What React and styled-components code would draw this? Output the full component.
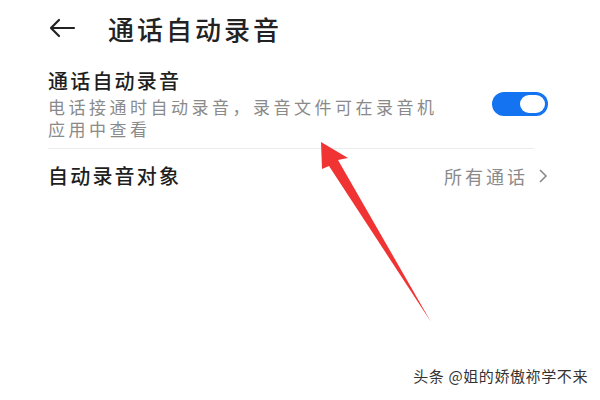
import React from "react";
import styled, { createGlobalStyle } from "styled-components";

const GlobalStyle = createGlobalStyle`
  html, body {
    margin: 0;
    padding: 0;
    background: #fff;
    font-family: "Noto Sans CJK SC", "Noto Sans", sans-serif;
  }
`;

const Page = styled.div`
  position: relative;
  width: 600px;
  height: 400px;
  overflow: hidden;
  background: #fff;
`;

const Header = styled.div`
  display: flex;
  align-items: center;
  height: 56px;
  padding-left: 48px;
`;

const BackBtn = styled.div`
  display: flex;
  align-items: center;
  width: 60px;
  color: #222;
`;

const Title = styled.div`
  font-size: 26px;
  letter-spacing: 3px;
  color: #222;
  font-weight: 500;
`;

const List = styled.div`
  padding: 0 66px 0 48px;
`;

const Row = styled.div`
  display: flex;
  align-items: center;
  justify-content: space-between;
  padding: ${(p) => p.pad || "10px 0"};
  border-bottom: ${(p) => (p.divider ? "1px solid #ececec" : "none")};
`;

const TextCol = styled.div`
  display: flex;
  flex-direction: column;
`;

const RowTitle = styled.div`
  font-size: 20px;
  letter-spacing: 2.2px;
  color: #1e1e1e;
  font-weight: 500;
  line-height: 26px;
`;

const RowSub = styled.div`
  font-size: 17px;
  letter-spacing: 3.5px;
  color: #8a8a8a;
  line-height: 22px;
  width: 400px;
  margin-top: 2px;
`;

const Toggle = styled.div`
  width: 56px;
  height: 24px;
  border-radius: 12px;
  background: #1473f0;
  display: flex;
  align-items: center;
  justify-content: flex-end;
  padding: 0 3px;
  box-sizing: border-box;
  margin-right: -14px;
`;

const Thumb = styled.div`
  width: 25px;
  height: 18px;
  border-radius: 10px;
  background: #fff;
`;

const Value = styled.div`
  display: flex;
  align-items: center;
  gap: 10px;
  font-size: 18px;
  letter-spacing: 3px;
  color: #8a8a8a;
  margin-right: -14px;
`;

const ArrowOverlay = styled.svg`
  position: absolute;
  left: 0;
  top: 0;
  pointer-events: none;
`;

const Watermark = styled.div`
  position: absolute;
  right: 12px;
  bottom: 14px;
  font-family: "Noto Sans CJK SC", sans-serif;
  font-size: 15px;
  letter-spacing: 0.6px;
  color: #333;
  text-shadow: 0 0 2px #fff, 0 0 2px #fff;
`;

export default function App() {
  return (
    <Page>
      <GlobalStyle />
      <Header>
        <BackBtn>
          <svg width="28" height="22" viewBox="0 0 28 22" fill="none" stroke="#222" strokeWidth="2.2" strokeLinecap="round" strokeLinejoin="round">
            <path d="M26 11H3M11 3L3 11L11 19" />
          </svg>
        </BackBtn>
        <Title>通话自动录音</Title>
      </Header>
      <List>
        <Row divider pad="12px 0 8px">
          <TextCol>
            <RowTitle>通话自动录音</RowTitle>
            <RowSub>电话接通时自动录音，录音文件可在录音机应用中查看</RowSub>
          </TextCol>
          <Toggle>
            <Thumb />
          </Toggle>
        </Row>
        <Row pad="14px 0">
          <RowTitle>自动录音对象</RowTitle>
          <Value>
            所有通话
            <svg width="10" height="16" viewBox="0 0 10 16" fill="none" stroke="#8a8a8a" strokeWidth="1.6">
              <path d="M2 2L8 8L2 14" />
            </svg>
          </Value>
        </Row>
      </List>
      <ArrowOverlay width="600" height="400" viewBox="0 0 600 400">
        <path d="M321 142 L348 158 L338 160 L431 322 L329 166 L322 169 Z" fill="#f03434" />
      </ArrowOverlay>
      <Watermark>头条 @姐的娇傲祢学不来</Watermark>
    </Page>
  );
}
